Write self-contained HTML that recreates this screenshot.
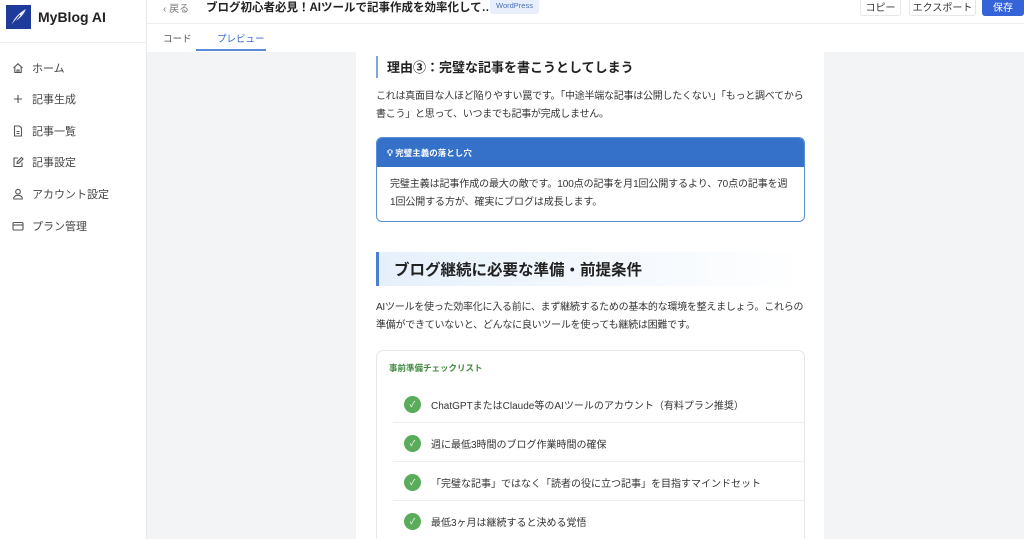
<!DOCTYPE html>
<html><head><meta charset="utf-8"><style>
*{box-sizing:border-box;margin:0;padding:0}
html{overflow:hidden}
body{width:1024px;height:539px;overflow:hidden;font-family:"Liberation Sans","Noto Sans CJK JP",sans-serif;background:#f3f4f6;position:relative;color:#333}
.sb{position:absolute;left:0;top:0;width:147px;height:539px;background:#fff;border-right:1px solid #e5e7eb}
.logo{position:absolute;left:6px;top:5px;width:25px;height:24px;background:#1e3a9a}
.brand{position:absolute;left:38px;top:9px;font-size:14px;font-weight:bold;color:#222}
.sbl{position:absolute;left:0;top:42px;width:147px;border-top:1px solid #eee}
.nav{position:absolute;left:12px;font-size:11px;color:#444;display:flex;align-items:center}
.nav svg{width:12px;height:12px;margin-right:8px}
.top{position:absolute;left:147px;top:0;right:0;height:24px;background:#fff;border-bottom:1px solid #eee}
.tabs{position:absolute;left:147px;top:24px;right:0;height:28px;background:#fff}
.btn{position:absolute;top:-3px;height:19px;border:1px solid #e5e7eb;border-radius:3px;font-size:10px;display:flex;align-items:center;justify-content:center;color:#333;background:#fff}
.art{position:absolute;left:356px;top:52px;width:468px;height:487px;background:#fff;overflow:hidden}
.p{font-size:10px;line-height:18px;color:#333}
.np{white-space:nowrap;letter-spacing:-0.25px}
.ck{position:absolute;left:27px;width:17px;height:17px;border-radius:50%;background:#5aac5a;color:#fff;font-size:8px;text-align:center;line-height:17px}
.it{position:absolute;left:54px;font-size:10px;color:#333}
.sep{position:absolute;left:16px;right:0;border-top:1px solid #eee}
</style></head><body>
<div class="sb">
<div class="logo"><svg width="25" height="24" viewBox="0 0 25 24"><path d="M5 21 Q9 10 20 4 Q17 12 8 17 Z" fill="#fff" opacity=".9"/><path d="M5 21 L14 10" stroke="#1e3a9a" stroke-width="1"/></svg></div>
<div class="brand">MyBlog AI</div>
<div class="sbl"></div>
<div class="nav" style="top:60px"><svg viewBox="0 0 12 12" fill="none" stroke="#555" stroke-width="1.1"><path d="M1.5 6 6 1.8 10.5 6M2.8 5v5.5h6.4V5"/><path d="M5 10.5V8h2v2.5"/></svg>ホーム</div>
<div class="nav" style="top:91px"><svg viewBox="0 0 12 12" fill="none" stroke="#555" stroke-width="1.1"><path d="M6 2v8M2 6h8"/></svg>記事生成</div>
<div class="nav" style="top:123px"><svg viewBox="0 0 12 12" fill="none" stroke="#555" stroke-width="1.1"><path d="M2.5 1h5l2 2v8h-7z M4.5 6.5h3M4.5 8.5h3"/></svg>記事一覧</div>
<div class="nav" style="top:154px"><svg viewBox="0 0 12 12" fill="none" stroke="#555" stroke-width="1.1"><path d="M6 2H2v8.5h8V6.5M5 7.5l.3-1.8L9.5 1.5 11 3 6.8 7.2z"/></svg>記事設定</div>
<div class="nav" style="top:186px"><svg viewBox="0 0 12 12" fill="none" stroke="#555" stroke-width="1.1"><circle cx="6" cy="3.7" r="2.3"/><path d="M1.8 11v-1.5Q3 7.3 6 7.3T10.2 9.5V11z"/></svg>アカウント設定</div>
<div class="nav" style="top:218px"><svg viewBox="0 0 12 12" fill="none" stroke="#555" stroke-width="1.1"><rect x="1" y="2.5" width="10" height="7.5" rx="1"/><path d="M1 5h10"/></svg>プラン管理</div>
</div>
<div class="top">
<div style="position:absolute;left:16px;top:0;font-size:10px;color:#777">‹ 戻る</div>
<div style="position:absolute;left:59px;top:-1px;font-size:11.5px;font-weight:bold;color:#222">ブログ初心者必見！AIツールで記事作成を効率化して…</div>
<div style="position:absolute;left:343px;top:-2px;height:16px;padding:0 6px;background:#e8eefa;border-radius:3px;font-size:7.5px;color:#4a6fb5;line-height:16px">WordPress</div>
<div class="btn" style="left:713px;width:41px">コピー</div>
<div class="btn" style="left:762px;width:67px">エクスポート</div>
<div class="btn" style="left:835px;width:42px;background:#3563d8;border-color:#3563d8;color:#fff">保存</div>
</div>
<div class="tabs">
<div style="position:absolute;left:16px;top:7px;font-size:9.5px;color:#555">コード</div>
<div style="position:absolute;left:70px;top:7px;font-size:9.5px;color:#3a6bc9">プレビュー</div>
<div style="position:absolute;left:49px;top:25px;width:70px;height:2px;background:#5b8ad6"></div>
</div>
<div class="art">
<div style="position:absolute;left:20px;top:4px;height:22px;border-left:2px solid #7ea4dc"></div>
<div style="position:absolute;left:31px;top:5px;font-size:13px;font-weight:bold;color:#222">理由③：完璧な記事を書こうとしてしまう</div>
<div class="p np" style="position:absolute;left:20px;top:36px">これは真面目な人ほど陥りやすい罠です。「中途半端な記事は公開したくない」「もっと調べてから<br>書こう」と思って、いつまでも記事が完成しません。</div>
<div style="position:absolute;left:20px;top:85px;width:429px;height:85px;border:1.5px solid #5a8fd6;border-radius:6px;overflow:hidden">
<div style="height:29px;background:#3571c9;color:#fff;font-size:8.5px;font-weight:bold;padding:9px 10px">💡︎ 完璧主義の落とし穴</div>
<div class="p np" style="padding:9px 13px;font-size:10px;letter-spacing:-0.1px">完璧主義は記事作成の最大の敵です。100点の記事を月1回公開するより、70点の記事を週<br>1回公開する方が、確実にブログは成長します。</div>
</div>
<div style="position:absolute;left:20px;top:200px;width:429px;height:34px;background:linear-gradient(90deg,#e6f0fb,#fff);border-left:3px solid #4a7fd0;font-size:15.5px;font-weight:bold;color:#222;padding:6px 15px">ブログ継続に必要な準備・前提条件</div>
<div class="p np" style="position:absolute;left:20px;top:247px">AIツールを使った効率化に入る前に、まず継続するための基本的な環境を整えましょう。これらの<br>準備ができていないと、どんなに良いツールを使っても継続は困難です。</div>
<div style="position:absolute;left:20px;top:298px;width:429px;height:200px;border:1px solid #e5e7eb;border-radius:7px">
<div style="position:absolute;left:12px;top:11px;font-size:8.5px;font-weight:bold;color:#3f8a3f">事前準備チェックリスト</div>
<div class="ck" style="top:45px">✓</div><div class="it" style="top:46px">ChatGPTまたはClaude等のAIツールのアカウント（有料プラン推奨）</div>
<div class="sep" style="top:71px"></div>
<div class="ck" style="top:84px">✓</div><div class="it" style="top:85px">週に最低3時間のブログ作業時間の確保</div>
<div class="sep" style="top:110px"></div>
<div class="ck" style="top:123px">✓</div><div class="it" style="top:124px">「完璧な記事」ではなく「読者の役に立つ記事」を目指すマインドセット</div>
<div class="sep" style="top:149px"></div>
<div class="ck" style="top:162px">✓</div><div class="it" style="top:163px">最低3ヶ月は継続すると決める覚悟</div>
</div>
</div>
</body></html>
